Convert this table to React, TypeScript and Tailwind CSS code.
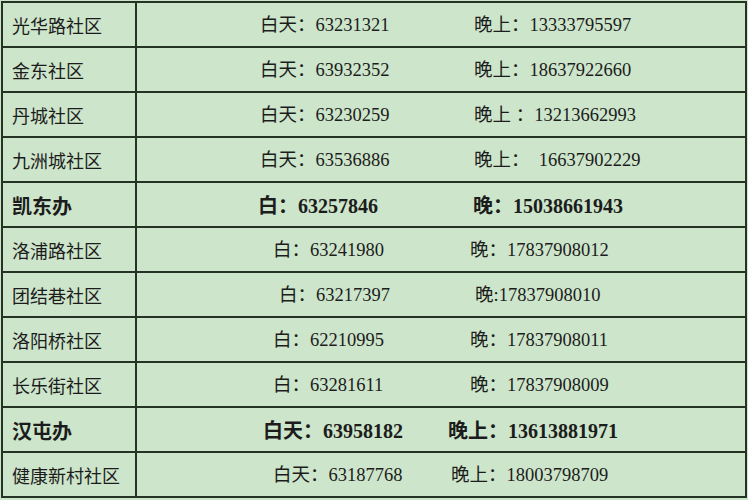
const rows = [
  { name: "光华路社区", bold: false, day: "白天：63231321", night: "晚上：13333795597", pl: "pl-[123px]", w: "w-[214px]" },
  { name: "金东社区", bold: false, day: "白天：63932352", night: "晚上：18637922660", pl: "pl-[123px]", w: "w-[214px]" },
  { name: "丹城社区", bold: false, day: "白天：63230259", night: "晚上 ：13213662993", pl: "pl-[123px]", w: "w-[214px]" },
  { name: "九洲城社区", bold: false, day: "白天：63536886", night: "晚上：  16637902229", pl: "pl-[123px]", w: "w-[214px]" },
  { name: "凯东办", bold: true, day: "白：63257846", night: "晚：15038661943", pl: "pl-[121px]", w: "w-[215px]" },
  { name: "洛浦路社区", bold: false, day: "白：63241980", night: "晚：17837908012", pl: "pl-[136px]", w: "w-[197px]" },
  { name: "团结巷社区", bold: false, day: "白：63217397", night: "晚:17837908010", pl: "pl-[142px]", w: "w-[196px]" },
  { name: "洛阳桥社区", bold: false, day: "白：62210995", night: "晚：17837908011", pl: "pl-[136px]", w: "w-[197px]" },
  { name: "长乐街社区", bold: false, day: "白：63281611", night: "晚：17837908009", pl: "pl-[136px]", w: "w-[197px]" },
  { name: "汉屯办", bold: true, day: "白天：63958182", night: "晚上：13613881971", pl: "pl-[126px]", w: "w-[185px]" },
  { name: "健康新村社区", bold: false, day: "白天：63187768", night: "晚上：18003798709", pl: "pl-[136px]", w: "w-[178px]" },
];

export default function App() {
  return (
    <div
      className="w-[748px] h-[500px] overflow-hidden bg-[#cde5ca] text-[#1c1c1c] pt-px pl-px"
      style={{ fontFamily: '"Liberation Serif", "Noto Sans CJK SC", serif' }}
    >
      <div className="w-[746px] border-x-2 border-t-2 border-[#243324]">
        {rows.map((r) => (
          <div key={r.name} className="flex h-[45px] border-b-2 border-[#243324]">
            <div
              className={`w-[134px] shrink-0 border-r-2 border-[#243324] pl-[9px] pt-[2px] flex items-center ${
                r.bold ? "text-[20px] font-bold" : "text-[18px]"
              }`}
              style={{ fontFamily: '"Noto Sans CJK SC", sans-serif' }}
            >
              {r.name}
            </div>
            <div
              className={`flex items-center whitespace-pre pt-[2px] ${r.pl} ${
                r.bold ? "text-[20px] font-bold" : "text-[18.5px]"
              }`}
            >
              <span className={`${r.w} shrink-0`}>{r.day}</span>
              <span>{r.night}</span>
            </div>
          </div>
        ))}
      </div>
    </div>
  );
}
